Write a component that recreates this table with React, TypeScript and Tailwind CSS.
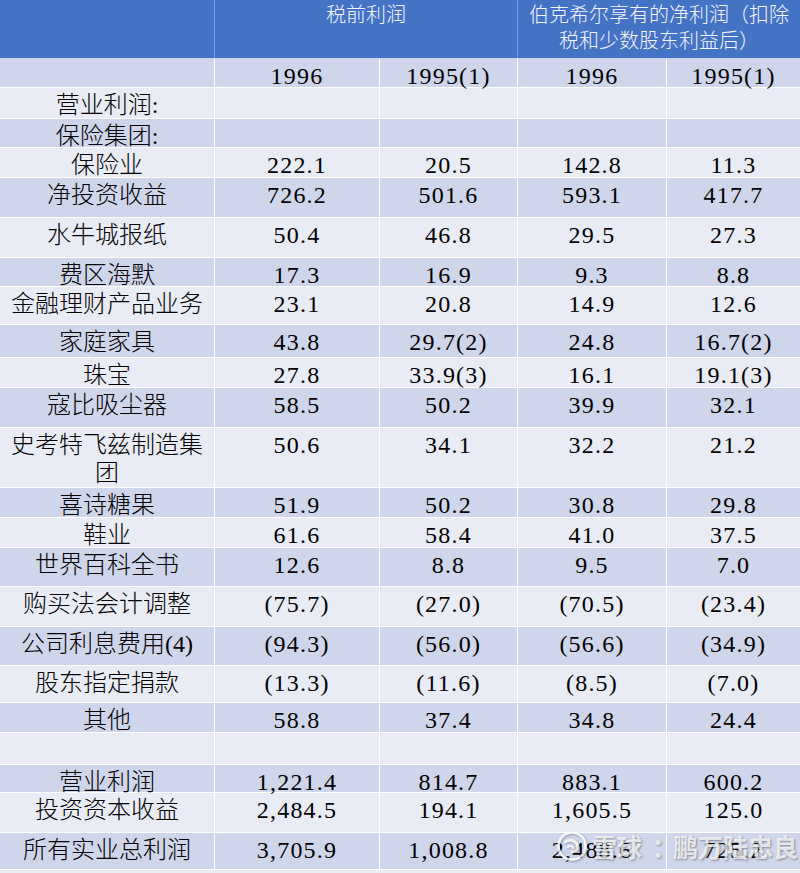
import React from 'react';

type Row = {
  label: string;
  v: string[];
  h: string;
};

const rows: Row[] = [
  { label: '', v: ['1996', '1995(1)', '1996', '1995(1)'], h: 'h-[29px]' },
  { label: '营业利润:', v: ['', '', '', ''], h: 'h-[31px]' },
  { label: '保险集团:', v: ['', '', '', ''], h: 'h-[29px]' },
  { label: '保险业', v: ['222.1', '20.5', '142.8', '11.3'], h: 'h-[30px]' },
  { label: '净投资收益', v: ['726.2', '501.6', '593.1', '417.7'], h: 'h-[40px]' },
  { label: '水牛城报纸', v: ['50.4', '46.8', '29.5', '27.3'], h: 'h-[40px]' },
  { label: '费区海默', v: ['17.3', '16.9', '9.3', '8.8'], h: 'h-[29px]' },
  { label: '金融理财产品业务', v: ['23.1', '20.8', '14.9', '12.6'], h: 'h-[38px]' },
  { label: '家庭家具', v: ['43.8', '29.7(2)', '24.8', '16.7(2)'], h: 'h-[33px]' },
  { label: '珠宝', v: ['27.8', '33.9(3)', '16.1', '19.1(3)'], h: 'h-[30px]' },
  { label: '寇比吸尘器', v: ['58.5', '50.2', '39.9', '32.1'], h: 'h-[40px]' },
  { label: '史考特飞兹制造集团', v: ['50.6', '34.1', '32.2', '21.2'], h: 'h-[60px]' },
  { label: '喜诗糖果', v: ['51.9', '50.2', '30.8', '29.8'], h: 'h-[30px]' },
  { label: '鞋业', v: ['61.6', '58.4', '41.0', '37.5'], h: 'h-[30px]' },
  { label: '世界百科全书', v: ['12.6', '8.8', '9.5', '7.0'], h: 'h-[39px]' },
  { label: '购买法会计调整', v: ['(75.7)', '(27.0)', '(70.5)', '(23.4)'], h: 'h-[40px]' },
  { label: '公司利息费用(4)', v: ['(94.3)', '(56.0)', '(56.6)', '(34.9)'], h: 'h-[39px]' },
  { label: '股东指定捐款', v: ['(13.3)', '(11.6)', '(8.5)', '(7.0)'], h: 'h-[37px]' },
  { label: '其他', v: ['58.8', '37.4', '34.8', '24.4'], h: 'h-[30px]' },
  { label: '', v: ['', '', '', ''], h: 'h-[32px]' },
  { label: '营业利润', v: ['1,221.4', '814.7', '883.1', '600.2'], h: 'h-[28px]' },
  { label: '投资资本收益', v: ['2,484.5', '194.1', '1,605.5', '125.0'], h: 'h-[40px]' },
  { label: '所有实业总利润', v: ['3,705.9', '1,008.8', '2,488.6', '725.2'], h: 'h-[37px]' },
];

const cols = 'grid grid-cols-[215px_165px_138px_149px_133px]';
const font = "font-['Liberation_Serif','Noto_Sans_CJK_SC',serif]";

// 雪球 watermark, sits over the last row like in the screenshot
const Watermark = () => {
  return (
    <div className="absolute left-[556px] top-[830px] flex items-center gap-[4px] text-white/75 font-['Noto_Sans_CJK_SC',sans-serif] font-bold text-[25px] leading-none [text-shadow:1px_1px_2px_rgba(0,0,0,0.35)]">
      <svg width="32" height="32" viewBox="0 0 32 32" className="opacity-80 drop-shadow-[1px_1px_1px_rgba(0,0,0,0.35)]">
        <circle cx="16" cy="16" r="13.5" fill="none" stroke="white" strokeWidth="2.6" />
        <path d="M9 12 C13 9 19 10 21 14 C23 18 20 22 16 22" fill="none" stroke="white" strokeWidth="2.6" strokeLinecap="round" />
        <path d="M12 17 C14 15 17 16 17 18" fill="none" stroke="white" strokeWidth="2.2" strokeLinecap="round" />
      </svg>
      <span>雪球</span>
      <span className="ml-[6px]">：</span>
      <span className="-ml-[8px]">鹏万陆忠良</span>
    </div>
  );
};

export default function App() {
  return (
    <main className={`relative w-[800px] h-[873px] overflow-hidden bg-[#e9ebf5] ${font} text-black`}>
      {/* header */}
      <div className={`${cols} h-[59px] bg-[#4472c4] text-[#f4f6fc] text-[20px] leading-[26px] font-light border-b border-[#c9d3ec]`}>
        <div className="border-r border-[#7f9ad6]" />
        <div className="col-span-2 border-r border-[#7f9ad6] text-center pt-[2px]">税前利润</div>
        <div className="col-span-2 text-center pt-[2px] px-[8px]">伯克希尔享有的净利润（扣除税和少数股东利益后）</div>
      </div>

      {rows.map((r, i) => (
        <div
          key={i}
          className={`${cols} ${r.h} border-b border-white ${i % 2 === 0 ? 'bg-[#cfd5ea]' : 'bg-[#e9ebf5]'}`}
        >
          <div className="border-r border-white text-center text-[24px] leading-[28px] pt-[3px] px-[4px] font-light">{r.label}</div>
          {r.v.map((n, j) => (
            <div
              key={j}
              className={`${j < 3 ? 'border-r border-white' : ''} text-center text-[24px] leading-[28px] pt-[3px] tracking-[1.2px]`}
            >
              {n}
            </div>
          ))}
        </div>
      ))}

      <Watermark />
    </main>
  );
}
